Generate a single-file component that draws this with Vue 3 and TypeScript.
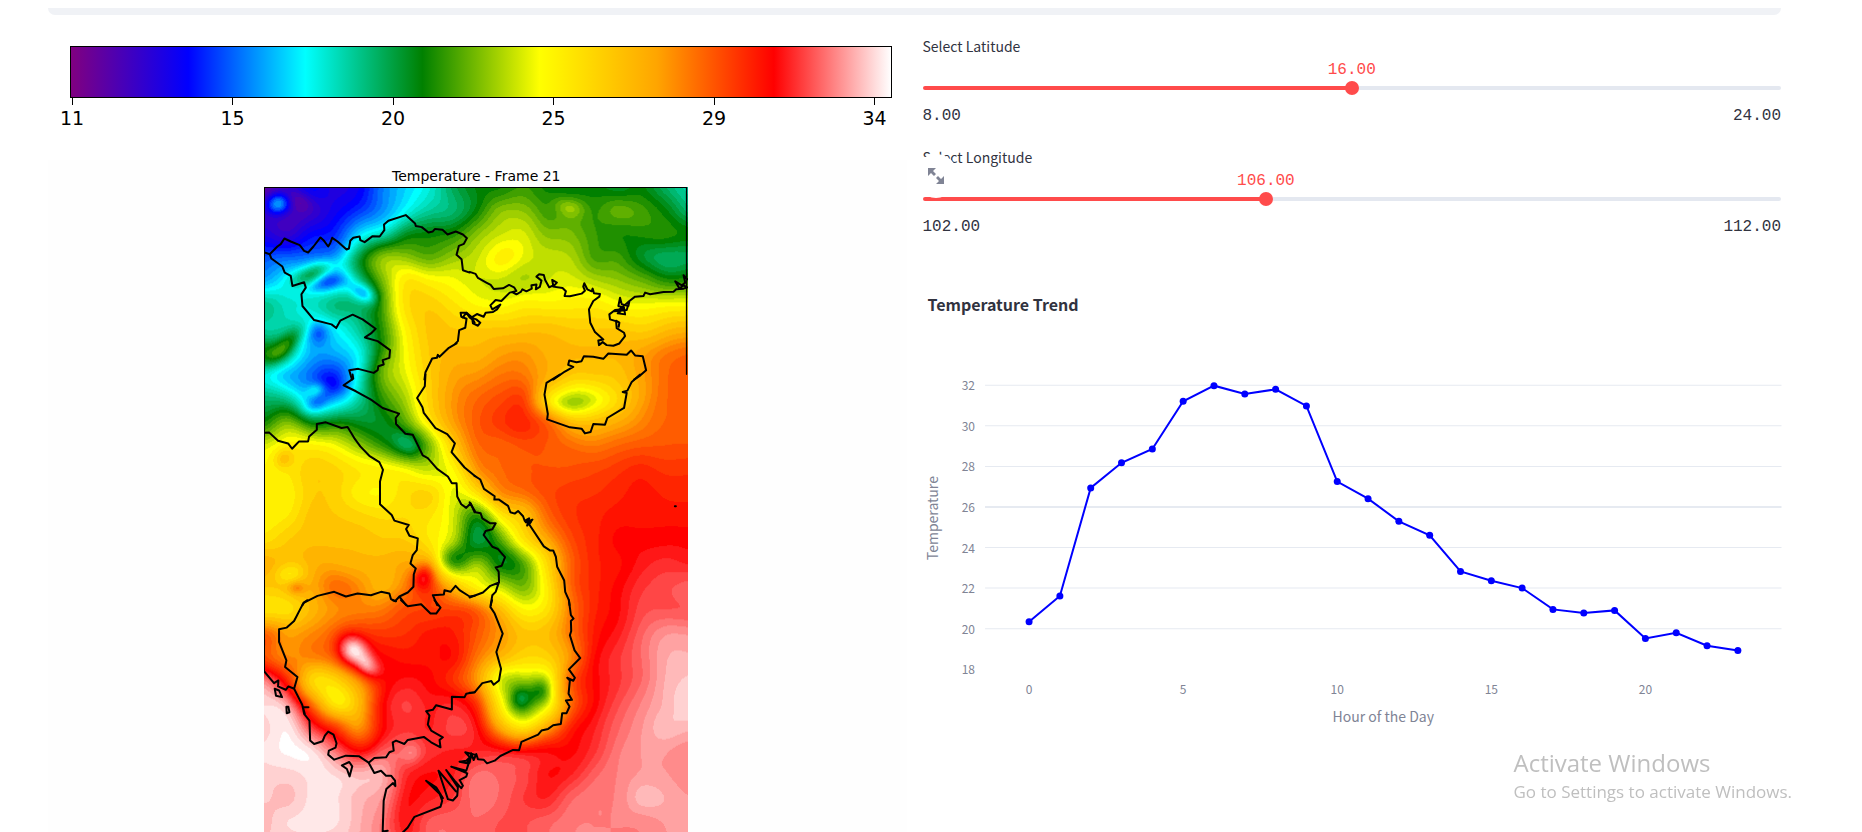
<script setup lang="ts">
import { computed, onMounted, reactive, ref } from 'vue'

type Rgb = [number, number, number]
interface Bump { x: number; y: number; sx: number; sy: number; tilt: number; amount: number }
interface Outline { shift: string; d: string }

const sliders = reactive([
  { id: 'latitude', label: 'Select Latitude', min: 8, max: 24, value: 16 },
  { id: 'longitude', label: 'Select Longitude', min: 102, max: 112, value: 106 },
])
const share = (s: { min: number; max: number; value: number }) => ((s.value - s.min) / (s.max - s.min)) * 100

const legend = [11, 15, 20, 25, 29, 34]

// Colour scale: seven equal segments, field values run from 0 to 70.
const scale: Rgb[] = [
  [128, 0, 128], [0, 0, 255], [0, 255, 255], [0, 128, 0],
  [255, 255, 0], [255, 165, 0], [255, 0, 0], [255, 255, 255],
]
// Number of contour bands inside each segment of the scale.
const bands = [8, 9, 9, 8, 6, 9, 11]

const field: number[][] = [
  [2, 5, 11, 7, 9, 15, 18, 21, 27, 30, 30, 32, 30, 29, 30, 28, 30, 26, 23],
  [5, 4, 5, 9, 11, 15, 20, 24, 25, 29, 36, 36, 31, 33, 31, 35, 33, 30, 25],
  [8, 5, 10, 11, 19, 22, 30, 30, 31, 36, 38, 39, 35, 35, 32, 30, 31, 32, 31],
  [13, 15, 14, 15, 29, 37, 36, 33, 36, 38, 41, 38, 38, 37, 32, 33, 28, 25, 26],
  [16, 20, 22, 16, 24, 35, 44, 42, 40, 38, 37, 36, 38, 39, 37, 36, 34, 31, 32],
  [26, 22, 22, 27, 26, 32, 44, 46, 43, 40, 40, 42, 41, 42, 42, 40, 40, 40, 41],
  [23, 23, 17, 19, 24, 31, 42, 47, 46, 46, 46, 47, 47, 46, 46, 46, 45, 47, 48],
  [31, 25, 17, 17, 20, 32, 40, 46, 48, 48, 50, 51, 49, 48, 48, 48, 50, 53, 54],
  [20, 16, 14, 11, 20, 35, 39, 46, 50, 51, 53, 53, 49, 46, 46, 46, 50, 54, 55],
  [26, 24, 17, 15, 24, 32, 37, 45, 51, 54, 56, 57, 44, 38, 39, 44, 50, 54, 54],
  [30, 36, 29, 31, 28, 28, 33, 43, 51, 55, 57, 59, 55, 48, 47, 49, 52, 54, 54],
  [39, 42, 42, 41, 36, 31, 27, 34, 45, 54, 54, 55, 55, 54, 53, 54, 55, 55, 55],
  [41, 42, 46, 45, 43, 42, 41, 37, 40, 52, 54, 55, 55, 55, 56, 57, 58, 57, 57],
  [42, 41, 46, 45, 41, 40, 44, 46, 38, 43, 52, 54, 56, 57, 57, 58, 59, 58, 58],
  [41, 42, 47, 46, 45, 44, 44, 43, 39, 29, 42, 46, 54, 57, 58, 59, 59, 59, 59],
  [43, 46, 47, 47, 47, 46, 46, 42, 38, 25, 32, 43, 50, 56, 58, 60, 60, 60, 60],
  [50, 47, 49, 49, 48, 48, 50, 48, 34, 40, 27, 32, 44, 54, 58, 59, 61, 62, 61],
  [46, 47, 49, 55, 52, 47, 52, 57, 47, 40, 38, 33, 41, 55, 58, 60, 62, 63, 64],
  [42, 42, 48, 51, 52, 53, 56, 56, 57, 56, 49, 40, 43, 53, 58, 60, 63, 63, 63],
  [56, 50, 52, 54, 57, 57, 57, 59, 59, 55, 51, 47, 47, 53, 59, 61, 64, 66, 66],
  [55, 51, 53, 54, 58, 60, 59, 59, 60, 53, 49, 44, 45, 51, 60, 62, 64, 67, 67],
  [66, 58, 42, 43, 50, 59, 61, 60, 57, 51, 36, 36, 38, 55, 60, 62, 64, 67, 68],
  [69, 68, 54, 39, 47, 60, 63, 61, 62, 58, 42, 32, 39, 54, 60, 63, 65, 67, 69],
  [68, 70, 63, 58, 49, 60, 62, 61, 63, 62, 49, 41, 50, 59, 61, 64, 66, 68, 67],
  [69, 70, 70, 65, 59, 64, 64, 62, 61, 61, 62, 62, 61, 60, 62, 65, 66, 66, 65],
  [68, 68, 69, 69, 68, 68, 61, 60, 61, 65, 64, 63, 60, 61, 64, 65, 66, 66, 65],
  [68, 67, 69, 69, 67, 66, 60, 61, 62, 65, 64, 62, 61, 64, 65, 65, 68, 67, 66],
  [67, 69, 69, 69, 67, 65, 60, 64, 64, 64, 63, 63, 64, 65, 65, 65, 65, 66, 66],
  [68, 68, 68, 68, 67, 65, 61, 64, 64, 64, 63, 63, 64, 65, 65, 65, 65, 66, 66],
]

// Local features narrower than one grid cell.
const bumps: Bump[] = [
  { x: 0.6, y: 0.7, sx: 0.35, sy: 0.3, tilt: 0, amount: 12 },
  { x: 1.5, y: 0.6, sx: 0.35, sy: 0.3, tilt: 0, amount: -3 },
  { x: 2.1, y: 3.6, sx: 0.7, sy: 0.28, tilt: -0.3, amount: 8 },
  { x: 2.6, y: 4.1, sx: 0.6, sy: 0.24, tilt: -0.2, amount: -6 },
  { x: 4.2, y: 4.5, sx: 0.4, sy: 0.28, tilt: 0.5, amount: -9 },
  { x: 0.9, y: 6.7, sx: 0.8, sy: 0.3, tilt: -0.8, amount: 7 },
  { x: 2.3, y: 6.2, sx: 0.3, sy: 0.35, tilt: 0, amount: -4 },
  { x: 2.9, y: 8.4, sx: 0.6, sy: 0.3, tilt: 0.4, amount: -3 },
  { x: 2.2, y: 8.6, sx: 0.3, sy: 0.2, tilt: 0, amount: 5 },
  { x: 2.2, y: 9.2, sx: 0.4, sy: 0.25, tilt: -0.6, amount: -4 },
  { x: 6.1, y: 10.9, sx: 0.5, sy: 0.3, tilt: 0.7, amount: -3 },
  { x: 12.9, y: 0.8, sx: 0.5, sy: 0.3, tilt: 0.2, amount: 4 },
  { x: 10.4, y: 3, sx: 0.6, sy: 0.4, tilt: -0.6, amount: 2 },
  { x: 13, y: 9.2, sx: 0.8, sy: 0.35, tilt: 0, amount: -4 },
  { x: 0.8, y: 11.5, sx: 0.3, sy: 0.3, tilt: 0, amount: 5 },
  { x: 8.2, y: 15.8, sx: 0.6, sy: 0.4, tilt: 0, amount: -5 },
  { x: 6.8, y: 16.5, sx: 0.35, sy: 0.4, tilt: 0.4, amount: 8 },
  { x: 1.1, y: 16.4, sx: 0.5, sy: 0.3, tilt: 0, amount: -5 },
  { x: 1.4, y: 17, sx: 0.25, sy: 0.2, tilt: 0, amount: 5 },
  { x: 3.7, y: 19.7, sx: 0.5, sy: 0.4, tilt: 0.7, amount: 12 },
  { x: 4.4, y: 20.4, sx: 0.4, sy: 0.3, tilt: 0.9, amount: 8 },
  { x: 11.8, y: 21.4, sx: 0.35, sy: 0.4, tilt: 0, amount: -6 },
  { x: 10.9, y: 21.8, sx: 0.35, sy: 0.4, tilt: 0, amount: -6 },
  { x: 6.3, y: 24.1, sx: 0.3, sy: 0.3, tilt: 0, amount: 2 },
]

const columns = field[0].length - 1
const rows = field.length - 1

function cell(r: number, c: number): number {
  return field[Math.min(rows, Math.max(0, r))][Math.min(columns, Math.max(0, c))]
}
// Even mix of an interpolating and a smoothing cubic.
function spline(a: number, b: number, c: number, d: number, t: number): number {
  const through = b + 0.5 * t * (c - a + t * (2 * a - 5 * b + 4 * c - d + t * (3 * (b - c) + d - a)))
  const s = 1 - t
  const smooth = (s * s * s * a + (3 * t * t * t - 6 * t * t + 4) * b
    + (3 * s * s * s - 6 * s * s + 4) * c + t * t * t * d) / 6
  return (through + smooth) / 2
}
function sample(x: number, y: number): number {
  const c = Math.floor(x)
  const r = Math.floor(y)
  const line = [-1, 0, 1, 2].map((k) =>
    spline(cell(r + k, c - 1), cell(r + k, c), cell(r + k, c + 1), cell(r + k, c + 2), x - c))
  let value = spline(line[0], line[1], line[2], line[3], y - r)
  for (const b of bumps) {
    const dx = x - b.x
    const dy = y - b.y
    if (Math.abs(dx) > 2 || Math.abs(dy) > 2) continue
    const u = (dx * Math.cos(b.tilt) + dy * Math.sin(b.tilt)) / b.sx
    const v = (dy * Math.cos(b.tilt) - dx * Math.sin(b.tilt)) / b.sy
    value += b.amount * Math.exp(-(u * u + v * v) / 2)
  }
  return value
}
function shade(value: number): Rgb {
  const v = Math.min(70, Math.max(0, value)) / 10
  const i = Math.min(6, Math.floor(v))
  const t = Math.round((v - i) * bands[i]) / bands[i]
  return scale[i].map((from, k) => from + (scale[i + 1][k] - from) * t) as Rgb
}

const surface = ref<HTMLCanvasElement | null>(null)
onMounted(() => {
  const canvas = surface.value
  const pen = canvas?.getContext('2d')
  if (!canvas || !pen) return
  const picture = pen.createImageData(canvas.width, canvas.height)
  for (let y = 0; y < canvas.height; y++) {
    for (let x = 0; x < canvas.width; x++) {
      // A slight ripple keeps the contour edges irregular.
      const gx = (x / canvas.width) * columns + 0.04 * Math.sin(y / 9 + x / 19)
      const gy = (y / canvas.height) * rows + 0.04 * Math.sin(x / 10 - y / 17)
      const [r, g, b] = shade(sample(gx, gy))
      picture.data.set([r, g, b, 255], (y * canvas.width + x) * 4)
    }
  }
  pen.putImageData(picture, 0, 0)
})

// Borders and coastlines, one entry per map sheet.
const outlines: Outline[] = [
  { shift: 'translate(-30 -84)', d: 'M30 279L47 285L70 262L80 255L91 238L110 247L137 258L150 275L162 280L178 262L199 235L208 243L222 262L228 252L234 236L250 247L277 271L284 268L288 245L297 236L316 232L318 243L331 249L355 231L376 232L390 213L389 196L402 185L454 168L482 193L484 201L502 204L522 220L535 217L541 210L564 212L579 226L604 217L625 226L637 237L628 254L613 260L606 287L621 300L625 333L645 340M660 490L650 472L636 460L618 460L620 472L636 478L632 505L614 512L610 545L600 555L606 552L583 565L555 592L550 586L547 595L533 597L513 638L510 660M293 660L285 632L312 628L358 640L370 632L372 620L388 615L385 602L405 595L407 572L370 545L332 534L350 522L364 508L325 480L295 466L258 484L246 506L232 495L180 482L145 440L142 405L155 385L150 369L115 380L110 350L92 340L85 322L52 298L47 285' },
  { shift: 'translate(615 -84)', d: 'M0 338L18 344L25 356L50 370L63 377L72 389L100 387L118 377L133 384L140 395L130 400L140 405L153 398L158 390L170 396L186 388L185 378L200 376L198 390L210 383L215 364L200 352L208 345L222 347L226 362L238 384L250 378L247 362L261 370L250 382L278 386L288 396L284 410L300 411L335 403L345 394L340 382L343 372L352 390L365 396L368 388L372 402L390 404L388 412L370 425L357 450L361 490L375 518L400 540L385 543L387 557L398 548L410 557L430 559L448 552L465 530L462 520L440 506L438 484L448 490L446 502M440 486L420 480L418 465L435 452L458 450L443 462L465 465L462 445L445 440L450 415L455 435L475 440L478 425L452 448L434 456L470 452L478 425L495 412L520 410L525 400L540 405L580 398L610 397L618 390L640 388L651 384L640 378L628 388L615 366L635 378L645 370L640 348L651 360M138 396L120 400L95 425L78 422L62 438L68 450L92 436L82 450L70 458L48 460L42 472L22 464L5 475L20 480L32 490L25 499L10 492L8 480L0 474L-10 460L-20 474M250 660L285 636L310 622L295 616L298 603L320 608L335 605L342 590L370 592L400 598L415 582L470 586L483 573L495 588L518 590L528 632L510 648L492 660' },
  { shift: 'translate(-30 561)', d: 'M513 0L511 35L488 70L504 98L508 115L543 160L578 178L601 206L591 232L630 278L660 303M660 412L648 385L635 399L620 388L608 365L606 325L592 325L580 305L548 282L520 250L505 242L475 180L453 177L425 148L424 130L434 117L385 100L350 75L305 50L268 32L297 12L295 0M30 174L45 173L72 198L102 206L114 222L135 200L162 200L165 185L188 165L188 148L215 143L262 160L280 157L300 190L318 215L345 243L375 262L386 285L377 320L377 388L412 420L420 437L463 450L455 462L465 482L490 490L487 525L475 540L468 565L484 580L478 598L477 635L460 652L435 664L422 678L410 672L405 655L380 650L350 660L310 655L275 664L240 650L190 662L150 682L145 690M435 664L455 690M548 690L535 660L568 658L570 645L588 650L603 632L615 645L645 664L660 662' },
  { shift: 'translate(615 561)', d: 'M15 303L32 314L43 342L75 364L74 374L88 374L115 393L122 412L135 416L145 408L160 424L165 438L178 430L172 452L188 434L168 442L184 440L178 448L222 514L240 526L250 526L258 545L262 575L283 616L286 650L297 675L299 690M63 690L68 660L78 650L88 620L87 590L78 577L96 572L106 546L85 522L68 515L42 480L48 468L68 463L78 445L62 445L38 430L33 415L18 412L0 382M0 667L40 652L62 632L88 622M270 0L230 25L224 60L234 118L232 134L300 158L335 162L345 176L362 172L370 148L405 150L412 130L462 100L470 55L458 52L472 48L485 22L510 0M614 394L617 394' },
  { shift: 'translate(-30 1236)', d: 'M660 462L632 455L646 470L635 480L615 483L638 488L650 465L635 510L590 498L638 518L635 528L615 538L625 555L620 562L600 540L575 508L610 560L608 585L595 599L580 595L552 510L590 555L604 572M400 690L385 692L388 600L396 565L416 547L423 556L422 540L410 525L395 525L380 510L360 517L343 486L315 467L275 465L240 477L222 462L224 450L244 441L247 428L238 402L222 393L212 405L205 422L180 430L168 420L166 360L150 340L146 320L163 320M152 340L144 312L120 265L103 258L95 268L72 258L73 240L60 248L30 212M445 695L460 680L480 648L558 618L563 600L556 580L515 540L545 560L565 592M343 486L360 472L395 470L405 455L418 450L415 425L425 420L450 430L460 418L508 409L530 425L558 440L555 418L565 410L530 390L520 372L525 345L515 332L535 328L545 314L592 327L592 289L630 290L635 280L660 275M160 0L148 8L120 62L98 82L75 87L75 125L97 180L93 200L130 230L120 265M415 0L425 3M440 0L460 18L500 12L528 40L545 40L558 22L540 0M62 265L75 270L84 290L66 286ZM97 319L103 319L106 335L98 338ZM263 494L285 484L294 497L286 527L278 505Z' },
  { shift: 'translate(615 1236)', d: 'M297 0L303 45L311 55L303 62L304 92L300 105L314 150L331 173L297 207L315 232L310 241L292 232L300 240L296 280L306 298L288 300L299 318L290 338L277 338L273 370L250 374L235 385L215 390L205 402L155 424L148 449L130 448L92 466L75 480L52 488L42 477L25 476L20 460L12 478L5 458L0 486M0 277L15 276L38 248L65 242L72 253L88 240L94 205L80 155L99 100L75 40L62 20L67 0' },
]

const readings = [
  20.34, 21.61, 26.94, 28.18, 28.86, 31.21, 31.98, 31.57, 31.8, 30.98, 27.25, 26.41,
  25.29, 24.6, 22.82, 22.36, 22, 20.95, 20.77, 20.9, 19.52, 19.8, 19.16, 18.92,
]
const hours = [0, 5, 10, 15, 20]
const degrees = [32, 30, 28, 26, 24, 22, 20, 18]
const px = (hour: number) => 106 + hour * 30.8
const py = (t: number) => 386 - (t - 18) * 20.27
const points = computed(() => readings.map((t, h) => ({ x: px(h), y: py(t) })))
const trace = computed(() => points.value.map((p) => `${p.x},${p.y}`).join(' '))
</script>

<template>
  <main class="page">
    <div class="progress"></div>
    <div class="columns">
      <section class="maps">
        <div class="legend">
          <div class="legend-bar"></div>
          <div class="legend-ticks">
            <span v-for="n in legend" :key="n" class="legend-tick">{{ n }}</span>
          </div>
        </div>
        <figure class="figure">
          <button class="expand" type="button" aria-label="View fullscreen">
            <svg viewBox="0 0 8 8" aria-hidden="true">
              <path d="M0 0v4l1.5-1.5 1.5 1.5 1-1-1.5-1.5 1.5-1.5h-4zM5 4l-1 1 1.5 1.5-1.5 1.5h4v-4l-1.5 1.5-1.5-1.5z" />
            </svg>
          </button>
          <figcaption>Temperature - Frame 21</figcaption>
          <div class="map">
            <canvas ref="surface" width="422" height="656"></canvas>
            <svg class="outlines" viewBox="0 0 1266 1968" aria-hidden="true">
              <path v-for="o in outlines" :key="o.shift" :transform="o.shift" :d="o.d" />
              <path class="frame" d="M1 1448V1H1264V560" />
            </svg>
          </div>
        </figure>
      </section>

      <section class="controls">
        <div v-for="s in sliders" :key="s.id" class="slider">
          <label :for="s.id">{{ s.label }}</label>
          <div class="value-row">
            <output :for="s.id" :style="{ marginLeft: share(s) + '%' }">{{ s.value.toFixed(2) }}</output>
          </div>
          <div class="rail" :style="{ '--share': share(s) + '%' }">
            <input :id="s.id" v-model.number="s.value" type="range" :min="s.min" :max="s.max" step="0.25">
          </div>
          <div class="bounds">
            <span>{{ s.min.toFixed(2) }}</span>
            <span>{{ s.max.toFixed(2) }}</span>
          </div>
        </div>

        <div class="trend">
          <h2>Temperature Trend</h2>
          <svg viewBox="0 0 858 450" role="img" aria-label="Temperature by hour of the day">
            <g v-for="d in degrees" :key="d">
              <line v-if="d > 18" class="grid" :class="{ strong: d === 26 }" x1="62" x2="858" :y1="py(d)" :y2="py(d)" />
              <text class="tick" x="52" :y="py(d) + 5" text-anchor="end">{{ d }}</text>
            </g>
            <text v-for="h in hours" :key="h" class="tick" :x="px(h)" y="411" text-anchor="middle">{{ h }}</text>
            <polyline class="trace" :points="trace" />
            <circle v-for="(p, i) in points" :key="i" class="dot" :cx="p.x" :cy="p.y" r="3.5" />
            <text class="axis" x="460" y="439" text-anchor="middle">Hour of the Day</text>
            <text class="axis" transform="translate(15 235) rotate(-90)" text-anchor="middle">Temperature</text>
          </svg>
        </div>
      </section>
    </div>

    <aside class="notice">
      <p class="notice-title">Activate Windows</p>
      <p class="notice-text">Go to Settings to activate Windows.</p>
    </aside>
  </main>
</template>

<style>
body {
  margin: 0;
  background: #fff;
}
</style>

<style scoped>
.page {
  box-sizing: border-box;
  height: 100vh;
  padding: 8px 81px 0 48px;
  overflow: hidden;
  color: #31333f;
  font-family: "Noto Sans CJK JP", "Noto Sans", sans-serif;
}
.progress {
  height: 7px;
  border-radius: 0 0 8px 8px;
  background: #f0f2f6;
}
.columns {
  display: grid;
  grid-template-columns: 1fr 1fr;
  gap: 16px;
}
.maps {
  padding-top: 31px;
}
.legend {
  height: 114px;
  font: 19px/24px "DejaVu Sans", sans-serif;
  color: #000;
}
.legend-bar {
  box-sizing: border-box;
  height: 52px;
  margin: 0 15px 0 22px;
  border: 1px solid #000;
  background: linear-gradient(90deg, #800080, #00f, #0ff, #008000, #ff0, #ffa500, #f00, #fff);
}
.legend-ticks {
  display: flex;
  justify-content: space-between;
  margin: 0 16px 0 8px;
}
.legend-tick {
  width: 32px;
  text-align: center;
}
.legend-tick::before {
  display: block;
  width: 1px;
  height: 7px;
  margin: 0 auto 1px;
  background: #000;
  content: "";
}
.figure {
  position: relative;
  margin: 0;
  padding-top: 6px;
  background: #fefefe;
}
.figure figcaption {
  padding-right: 2px;
  color: #000;
  font: 14px/21px "DejaVu Sans", sans-serif;
  text-align: center;
}
.expand {
  position: absolute;
  top: -6px;
  right: -51px;
  display: flex;
  align-items: center;
  justify-content: center;
  width: 44px;
  height: 44px;
  padding: 0;
  border: 0;
  border-radius: 50%;
  background: #fff;
}
.expand svg {
  width: 16px;
  height: 16px;
  fill: #808495;
}
.map {
  position: relative;
  width: 49.3%;
  margin-left: 25.2%;
  aspect-ratio: 422 / 656;
}
.map canvas {
  display: block;
  width: 100%;
  height: 100%;
}
.outlines {
  position: absolute;
  inset: 0;
  width: 100%;
  height: 100%;
  fill: none;
  stroke: #000;
  stroke-width: 6;
  stroke-linejoin: round;
  stroke-linecap: round;
}
.frame {
  stroke-width: 4;
}
.controls {
  padding-top: 19px;
}
.slider {
  display: flex;
  flex-direction: column;
  height: 111px;
}
.slider label {
  font-size: 14px;
  line-height: 24px;
}
.value-row,
.bounds {
  font: 16px/24px "Liberation Mono", monospace;
}
.value-row {
  display: flex;
  height: 24px;
  color: #ff4b4b;
}
.value-row output {
  width: 0;
  display: flex;
  justify-content: center;
}
.rail {
  display: flex;
  align-items: center;
  height: 4px;
  border-radius: 4px;
  margin: 4px 0 14px;
  background: linear-gradient(90deg, #ff4b4b var(--share), #e4e8f0 var(--share));
}
.rail input {
  flex: 1;
  height: 14px;
  margin: 0 -7px;
  appearance: none;
  background: transparent;
}
.rail input::-webkit-slider-thumb {
  width: 14px;
  height: 14px;
  border: 0;
  border-radius: 50%;
  appearance: none;
  background: #ff4b4b;
}
.bounds {
  display: flex;
  justify-content: space-between;
}
.trend h2 {
  margin: 36px 0 -33px;
  padding-left: 5px;
  font-size: 16px;
  font-weight: 700;
  line-height: 24px;
}
.trend svg {
  display: block;
  width: 100%;
  overflow: visible;
}
.grid {
  stroke: #e6eaf1;
  stroke-width: 1;
}
.strong {
  stroke-width: 2;
}
.tick {
  fill: #808495;
  font-size: 12px;
}
.axis {
  fill: #808495;
  font-size: 14px;
}
.trace {
  fill: none;
  stroke: #00f;
  stroke-width: 2;
}
.dot {
  fill: #00f;
}
.notice {
  position: fixed;
  right: 70px;
  bottom: 26px;
  color: #bfbfbf;
  font-family: "Open Sans", "Noto Sans", sans-serif;
}
.notice p {
  margin: 0;
  line-height: 29px;
}
.notice-title {
  font-size: 24px;
}
.notice-text {
  font-size: 17px;
}
</style>
